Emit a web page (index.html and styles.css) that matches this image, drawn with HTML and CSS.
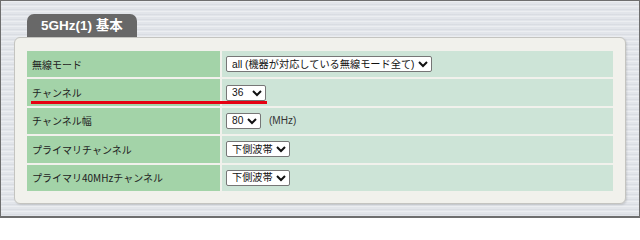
FILE: index.html
```html
<!DOCTYPE html>
<html lang="ja">
<head>
<meta charset="utf-8">
<title>5GHz(1) 基本</title>
<link rel="stylesheet" href="styles.css">
</head>
<body>
<div class="frame">
  <div class="tab">5GHz(1) 基本</div>
  <div class="panel">
    <div class="grid">
      <div class="lbl">無線モード</div>
      <div class="val">
        <select class="sel">
          <option>all (機器が対応している無線モード全て)</option>
          <option>11a</option>
          <option>11n</option>
          <option>11ac</option>
        </select>
      </div>
      <div class="lbl">チャンネル</div>
      <div class="val">
        <select class="sel">
          <option>36</option><option>40</option><option>44</option><option>48</option>
          <option>100</option><option>104</option><option>108</option><option>112</option>
        </select>
      </div>
      <div class="lbl">チャンネル幅</div>
      <div class="val">
        <select class="sel">
          <option>80</option><option>40</option><option>20</option>
        </select>
        <span class="unit">(MHz)</span>
      </div>
      <div class="lbl">プライマリチャンネル</div>
      <div class="val">
        <select class="sel">
          <option>下側波帯</option><option>上側波帯</option>
        </select>
      </div>
      <div class="lbl">プライマリ40MHzチャンネル</div>
      <div class="val">
        <select class="sel">
          <option>下側波帯</option><option>上側波帯</option>
        </select>
      </div>
      <div class="redline"></div>
    </div>
  </div>
</div>
</body>
</html>
```
FILE: styles.css
```css
html, body {
  margin: 0;
  padding: 0;
}
body {
  width: 640px;
  height: 218px;
  overflow: hidden;
  font-family: "Noto Sans CJK JP", "Liberation Sans", sans-serif;
}
.frame {
  box-sizing: border-box;
  width: 640px;
  height: 218px;
  border: 1px solid #6e6e6e;
  border-bottom-width: 2px;
  padding: 13px 13px 0 13px;
  background-color: #e2e5ea;
  background-image: repeating-linear-gradient(180deg,
    rgba(255,255,255,0.35) 0px, rgba(255,255,255,0.35) 1px,
    rgba(0,0,0,0) 1px, rgba(0,0,0,0) 3px,
    rgba(120,125,140,0.08) 3px, rgba(120,125,140,0.08) 4px,
    rgba(0,0,0,0) 4px, rgba(0,0,0,0) 5px);
}
.tab {
  margin-left: 13px;
  width: 110px;
  height: 23px;
  box-sizing: border-box;
  background: #686868;
  border-radius: 7px 7px 0 0;
  color: #fff;
  font-family: "Liberation Sans", "Noto Sans CJK JP", sans-serif;
  font-weight: bold;
  font-size: 13.5px;
  line-height: 24px;
  text-align: center;
}
.panel {
  box-sizing: border-box;
  width: 612px;
  border: 1px solid #c4c4c0;
  border-radius: 6px;
  background: #f1f1ec;
  padding: 13px 12px 12px 12px;
  box-shadow: 1px 1px 2px rgba(0,0,0,0.12);
}
.grid {
  position: relative;
  display: grid;
  grid-template-columns: 193px 1fr;
  grid-auto-rows: 26.4px;
  gap: 2px;
}
.lbl {
  background: #a3d3a8;
  color: #222;
  font-size: 10px;
  display: flex;
  align-items: center;
  padding-left: 5px;
}
.val {
  background: #cde4d7;
  display: flex;
  align-items: center;
  padding-left: 4px;
}
.sel {
  height: 16px;
  box-sizing: border-box;
  font-family: "Liberation Sans", "Noto Sans CJK JP", sans-serif;
  font-size: 10.2px;
  font-weight: normal;
  color: #111;
  background: #fff;
  border: 1px solid #767676;
  border-radius: 2px;
  padding: 0 0 0 1px;
  margin: 0;
}
.unit {
  margin-left: 8px;
  font-family: "Liberation Sans", sans-serif;
  font-size: 10px;
  color: #333;
}
.redline {
  position: absolute;
  left: 4px;
  top: 50.4px;
  width: 236px;
  height: 2.5px;
  background: #e60012;
}
```
